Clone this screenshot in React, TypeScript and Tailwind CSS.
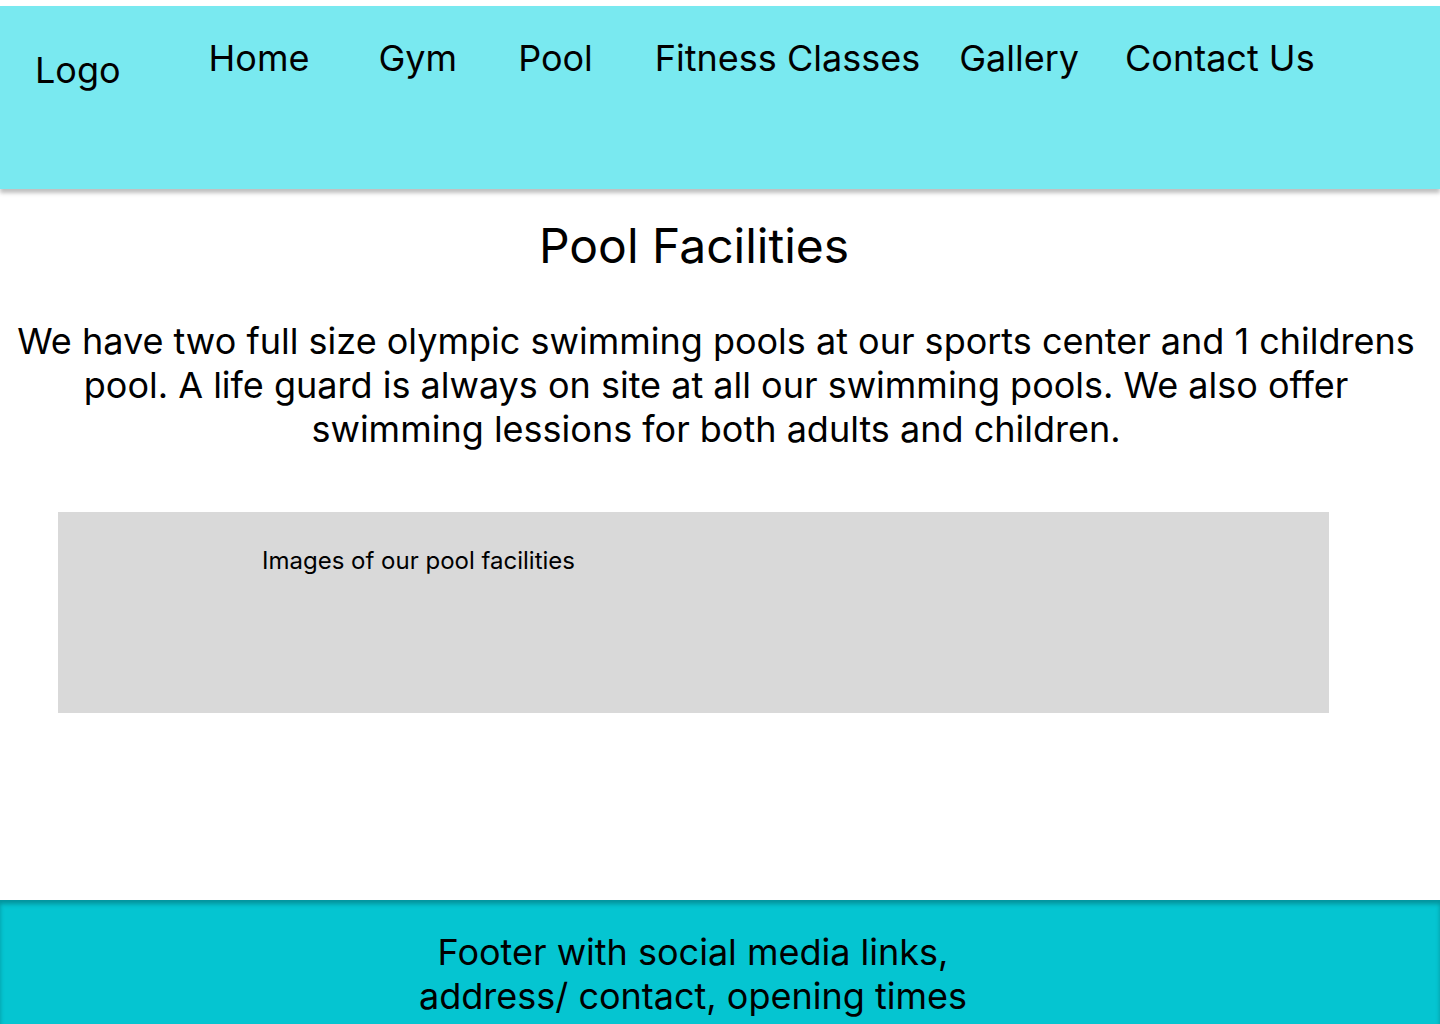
export default function App() {
  const navItems = [
    { label: 'Home', className: 'ml-[88px]' },
    { label: 'Gym', className: 'ml-[69px]' },
    { label: 'Pool', className: 'ml-[61px]' },
    { label: 'Fitness Classes', className: 'ml-[62px]' },
    { label: 'Gallery', className: 'ml-[39px]' },
    { label: 'Contact Us', className: 'ml-[46px]' }
  ];

  return (
    <div className="min-h-[1024px] bg-white pt-[6px] text-black font-['Inter',_'Noto_Sans',sans-serif] overflow-hidden">
      <header className="h-[183px] bg-[#79e9f0] shadow-[0_4px_4px_rgba(0,0,0,0.25)] flex items-start px-[35px] relative z-10">
        <div className="mt-[42px] text-[36px] leading-[44px]">Logo</div>
        <nav className="flex mt-[30px]">
          {navItems.map((item, index) => (
            <a key={index} className={`text-[36px] leading-[44px] ${item.className}`}>
              {item.label}
            </a>
          ))}
        </nav>
      </header>

      <main>
        <h1 className="mt-[28px] pr-[52px] text-center text-[48px] leading-[58px]">Pool Facilities</h1>
        <p className="mt-[44px] pl-[10px] pr-[18px] text-center text-[36px] leading-[44px]">
          We have two full size olympic swimming pools at our sports center and 1 childrens pool. A life guard is always on site at all our swimming pools. We also offer swimming lessions for both adults and children.
        </p>
        <div className="ml-[58px] mt-[61px] w-[1271px] h-[201px] bg-[#d9d9d9] pl-[204px] pt-[35px]">
          <span className="text-[24px] leading-[28px]">Images of our pool facilities</span>
        </div>
      </main>

      <footer className="mt-[187px] h-[124px] bg-[#05c5d1] shadow-[inset_0_4px_4px_rgba(0,0,0,0.25)] pt-[30px] pr-[54px] text-center text-[36px] leading-[44px]">
        <p>Footer with social media links,</p>
        <p>address/ contact, opening times</p>
      </footer>
    </div>
  );
}
